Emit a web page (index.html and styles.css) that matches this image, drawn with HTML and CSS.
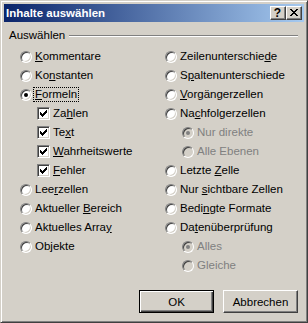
FILE: index.html
```html
<!DOCTYPE html>
<html lang="de">
<head>
    <meta charset="UTF-8">
    <meta name="viewport" content="width=device-width, initial-scale=1.0">
    <title>Inhalte auswählen</title>
    <link rel="stylesheet" href="styles.css">
</head>
<body>
    <div class="window">
        <div class="titlebar">
            <span class="title">Inhalte auswählen</span>
            <div class="caption-buttons">
                <span class="cap-btn help">?</span>
                <span class="cap-btn close">
                    <svg width="8" height="7" viewBox="0 0 8 7" shape-rendering="crispEdges"><path d="M0 0h2v1H0z M6 0h2v1H6z M1 1h2v1H1z M5 1h2v1H5z M2 2h4v1H2z M3 3h2v1H3z M2 4h4v1H2z M1 5h2v1H1z M5 5h2v1H5z M0 6h2v1H0z M6 6h2v1H6z"/></svg>
                </span>
            </div>
        </div>

        <div class="client">
            <div class="group-head">
                <span class="group-label">Auswählen</span>
                <span class="etched"></span>
            </div>

            <div class="columns">
                <div class="col">
                    <div class="option"><span class="radio"></span><span class="label"><u>K</u>ommentare</span></div>
                    <div class="option"><span class="radio"></span><span class="label">Ko<u>n</u>stanten</span></div>
                    <div class="option"><span class="radio checked"></span><span class="label focus"><u>F</u>ormeln</span></div>
                    <div class="option sub"><span class="check"><svg width="7" height="7" viewBox="0 0 7 7" shape-rendering="crispEdges"><path d="M6 0h1v1H6z M5 1h2v1H5z M0 2h1v1H0z M4 2h3v1H4z M0 3h2v1H0z M3 3h3v1H3z M0 4h5v1H0z M1 5h3v1H1z M2 6h1v1H2z"/></svg></span><span class="label">Za<u>h</u>len</span></div>
                    <div class="option sub"><span class="check"><svg width="7" height="7" viewBox="0 0 7 7" shape-rendering="crispEdges"><path d="M6 0h1v1H6z M5 1h2v1H5z M0 2h1v1H0z M4 2h3v1H4z M0 3h2v1H0z M3 3h3v1H3z M0 4h5v1H0z M1 5h3v1H1z M2 6h1v1H2z"/></svg></span><span class="label">Te<u>x</u>t</span></div>
                    <div class="option sub"><span class="check"><svg width="7" height="7" viewBox="0 0 7 7" shape-rendering="crispEdges"><path d="M6 0h1v1H6z M5 1h2v1H5z M0 2h1v1H0z M4 2h3v1H4z M0 3h2v1H0z M3 3h3v1H3z M0 4h5v1H0z M1 5h3v1H1z M2 6h1v1H2z"/></svg></span><span class="label"><u>W</u>ahrheitswerte</span></div>
                    <div class="option sub"><span class="check"><svg width="7" height="7" viewBox="0 0 7 7" shape-rendering="crispEdges"><path d="M6 0h1v1H6z M5 1h2v1H5z M0 2h1v1H0z M4 2h3v1H4z M0 3h2v1H0z M3 3h3v1H3z M0 4h5v1H0z M1 5h3v1H1z M2 6h1v1H2z"/></svg></span><span class="label"><u>F</u>ehler</span></div>
                    <div class="option"><span class="radio"></span><span class="label">Lee<u>r</u>zellen</span></div>
                    <div class="option"><span class="radio"></span><span class="label">Aktueller <u>B</u>ereich</span></div>
                    <div class="option"><span class="radio"></span><span class="label">Aktuelles Arra<u>y</u></span></div>
                    <div class="option"><span class="radio"></span><span class="label">Ob<u>j</u>ekte</span></div>
                </div>

                <div class="col">
                    <div class="option"><span class="radio"></span><span class="label">Zeilenunterschie<u>d</u>e</span></div>
                    <div class="option"><span class="radio"></span><span class="label">S<u>p</u>altenunterschiede</span></div>
                    <div class="option"><span class="radio"></span><span class="label"><u>V</u>orgängerzellen</span></div>
                    <div class="option"><span class="radio"></span><span class="label">Na<u>c</u>hfolgerzellen</span></div>
                    <div class="option sub disabled"><span class="radio checked"></span><span class="label">Nur direkte</span></div>
                    <div class="option sub disabled"><span class="radio"></span><span class="label">Alle Ebenen</span></div>
                    <div class="option"><span class="radio"></span><span class="label">Letzte <u>Z</u>elle</span></div>
                    <div class="option"><span class="radio"></span><span class="label">Nur <u>s</u>ichtbare Zellen</span></div>
                    <div class="option"><span class="radio"></span><span class="label">Bedi<u>n</u>gte Formate</span></div>
                    <div class="option"><span class="radio"></span><span class="label">Da<u>t</u>enüberprüfung</span></div>
                    <div class="option sub disabled"><span class="radio checked"></span><span class="label">Alles</span></div>
                    <div class="option sub disabled"><span class="radio"></span><span class="label">Gleiche</span></div>
                </div>
            </div>

            <div class="actions">
                <button class="btn btn-default">OK</button>
                <button class="btn">Abbrechen</button>
            </div>
        </div>
    </div>
</body>
</html>
```

FILE: styles.css
```css
* {
    box-sizing: border-box;
}
body {
    margin: 0;
    font-family: "Liberation Sans", Arial, sans-serif;
    font-size: 11.5px;
    color: #000;
    background: #d4d0c8;
}
.window {
    width: 308px;
    height: 323px;
    display: flex;
    flex-direction: column;
    padding: 3px;
    background: #d4d0c8;
    border: 1px solid;
    border-color: #d4d0c8 #404040 #404040 #d4d0c8;
    box-shadow: inset 1px 1px 0 #fff, inset -1px -1px 0 #808080;
}
.titlebar {
    height: 18px;
    flex: none;
    display: flex;
    align-items: center;
    justify-content: space-between;
    padding: 0 2px;
    background: linear-gradient(to right, #0a246a, #a6caf0);
    color: #fff;
    font-weight: bold;
}
.caption-buttons {
    display: flex;
}
.cap-btn {
    width: 16px;
    height: 14px;
    display: flex;
    align-items: center;
    justify-content: center;
    background: #d4d0c8;
    color: #000;
    border: 1px solid;
    border-color: #fff #404040 #404040 #fff;
    box-shadow: inset -1px -1px 0 #808080;
}
.help {
    font-size: 12px;
    line-height: 12px;
    padding-right: 1px;
}
.close svg {
    margin: -1px 1px 0 0;
}
.client {
    flex: 1;
    display: flex;
    flex-direction: column;
    padding: 6px 6px 6px 5px;
}
.group-head {
    height: 14px;
    display: flex;
    align-items: center;
}
.etched {
    flex: 1;
    height: 2px;
    margin: 2px 0 0 4px;
    border-top: 1px solid #808080;
    border-bottom: 1px solid #fff;
}
.columns {
    display: grid;
    grid-template-columns: 145px 1fr;
    margin-top: 5px;
    padding-left: 11px;
}
.option {
    height: 19px;
    display: flex;
    align-items: center;
}
.option.sub {
    padding-left: 17px;
}
.label {
    margin-left: 1px;
    padding: 0 1px;
    border: 1px dotted transparent;
    line-height: 13px;
    white-space: nowrap;
}
.label.focus {
    border-color: #000;
}
.disabled .label {
    color: #808080;
}
.radio {
    position: relative;
    width: 12px;
    height: 12px;
    flex: none;
    border-radius: 50%;
    border: 1px solid;
    border-color: #808080 #fff #fff #808080;
    background: #fff;
    box-shadow: inset 1px 1px 0 #404040, inset -1px -1px 0 #d4d0c8;
}
.radio.checked::after {
    content: "";
    position: absolute;
    left: 3px;
    top: 3px;
    width: 4px;
    height: 4px;
    border-radius: 50%;
    background: #000;
}
.disabled .radio {
    background: #d4d0c8;
}
.disabled .radio.checked::after {
    background: #808080;
}
.check {
    width: 13px;
    height: 13px;
    flex: none;
    display: flex;
    align-items: center;
    justify-content: center;
    border: 1px solid;
    border-color: #808080 #fff #fff #808080;
    background: #fff;
    box-shadow: inset 1px 1px 0 #404040, inset -1px -1px 0 #d4d0c8;
}
.actions {
    margin-top: auto;
    display: flex;
    justify-content: flex-end;
    gap: 9px;
}
.btn {
    width: 75px;
    height: 23px;
    padding: 0;
    font: inherit;
    color: #000;
    background: #d4d0c8;
    border: 1px solid;
    border-color: #fff #404040 #404040 #fff;
    border-radius: 0;
    box-shadow: inset -1px -1px 0 #808080;
}
.btn-default {
    border-color: #000;
    box-shadow: inset 1px 1px 0 #fff, inset -1px -1px 0 #404040, inset -2px -2px 0 #808080;
}
```
